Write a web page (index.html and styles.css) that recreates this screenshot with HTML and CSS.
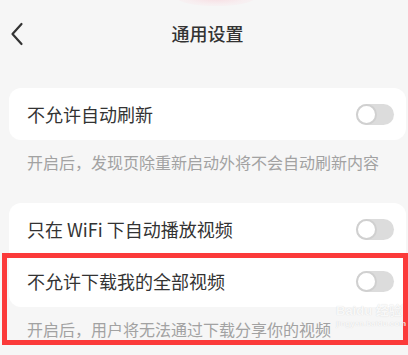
FILE: index.html
```html
<!DOCTYPE html>
<html lang="zh">
<head>
<meta charset="utf-8">
<link rel="stylesheet" href="styles.css">
</head>
<body>
<div class="page">
  <div class="glow"></div>
  <header class="topbar">
    <svg class="back" width="14" height="24" viewBox="0 0 14 24"><path d="M11.5 2 L2.5 12 L11.5 22" fill="none" stroke="#333" stroke-width="2.2" stroke-linecap="round" stroke-linejoin="round"/></svg>
    <h1 class="title">通用设置</h1>
  </header>

  <section class="card">
    <div class="row">
      <span class="label">不允许自动刷新</span>
      <span class="switch"><span class="knob"></span></span>
    </div>
  </section>
  <p class="desc">开启后，发现页除重新启动外将不会自动刷新内容</p>

  <section class="card">
    <div class="row">
      <span class="label">只在 WiFi 下自动播放视频</span>
      <span class="switch"><span class="knob"></span></span>
    </div>
    <div class="row">
      <span class="label">不允许下载我的全部视频</span>
      <span class="switch"><span class="knob"></span></span>
    </div>
  </section>
  <p class="desc">开启后，用户将无法通过下载分享你的视频</p>

  <div class="highlight"></div>
  <div class="watermark">
    <span class="wm-top">Baidu 经验</span>
    <span class="wm-bottom">jingyan.baidu.com</span>
  </div>
</div>
</body>
</html>
```
FILE: styles.css
```css
html, body {
  margin: 0;
  padding: 0;
  background: #f6f6f6;
}
.page {
  position: relative;
  width: 408px;
  height: 355px;
  overflow: hidden;
  font-family: "Noto Sans CJK SC", "Noto Sans", sans-serif;
  color: #333;
}
.glow {
  position: absolute;
  left: 178px;
  top: -9px;
  width: 76px;
  height: 15px;
  border-radius: 50%;
  background: radial-gradient(ellipse at center, rgba(248,205,213,0.6) 0%, rgba(250,225,230,0.35) 55%, rgba(246,246,246,0) 100%);
}
.topbar {
  height: 66px;
  display: flex;
  align-items: center;
  justify-content: center;
  position: relative;
}
.back {
  position: absolute;
  left: 10px;
  top: 22px;
}
.title {
  margin: 0;
  font-size: 18px;
  font-weight: 500;
  color: #333;
  line-height: 1;
  padding-left: 7px;
}
.card {
  margin: 22px 2px 0 9px;
  background: #fff;
  border-radius: 12px;
}
.card + .desc + .card {
  margin-top: 0;
}
.row {
  height: 52px;
  display: flex;
  align-items: center;
  justify-content: space-between;
  padding: 0 12px 0 18px;
}
.label {
  font-size: 18px;
  color: #333;
  line-height: 1;
}
.switch {
  width: 38px;
  height: 21px;
  border-radius: 11px;
  background: #dcdcdc;
  position: relative;
  display: flex;
  align-items: center;
}
.knob {
  width: 17px;
  height: 17px;
  border-radius: 50%;
  background: #fff;
  border: 2px solid #d0d0d0;
}
.desc {
  margin: 0;
  padding: 12px 0 31px 27px;
  font-size: 16px;
  line-height: 20px;
  color: #a2a2a2;
}
.highlight {
  position: absolute;
  left: 2px;
  top: 253px;
  width: 396px;
  height: 82px;
  border: 5px solid #fb3a3a;
}
.watermark {
  position: absolute;
  left: 336px;
  top: 304px;
  display: flex;
  flex-direction: column;
  color: rgba(255,255,255,0.85);
  text-shadow: 0 0 1px rgba(0,0,0,0.15);
  font-family: "Liberation Sans", "Noto Sans CJK SC", sans-serif;
  font-weight: bold;
  line-height: 1;
}
.wm-top {
  font-size: 13px;
}
.wm-bottom {
  font-size: 8px;
  margin-top: 3px;
}
```
